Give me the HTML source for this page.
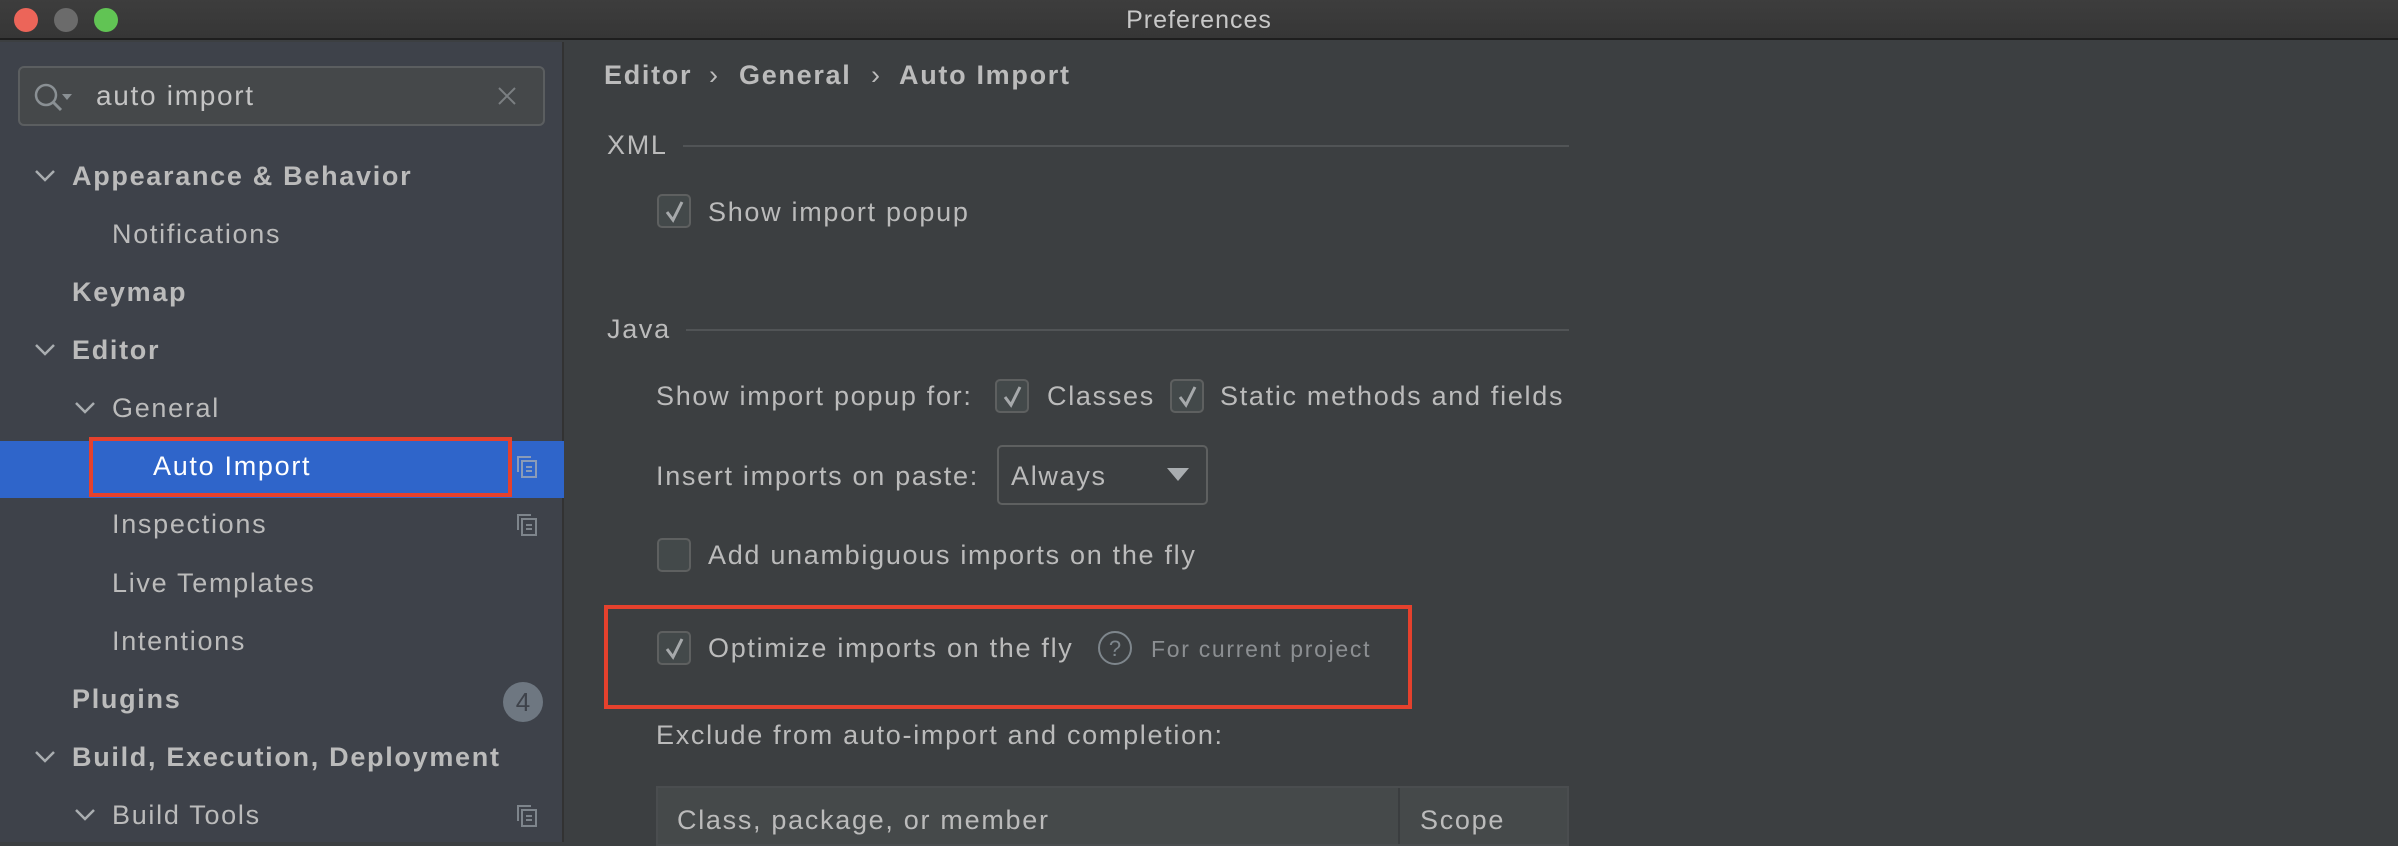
<!DOCTYPE html>
<html><head><meta charset="utf-8"><style>
*{margin:0;padding:0;box-sizing:border-box}
body{width:2398px;height:842px;overflow:hidden;background:#3c3f41;font-family:"Liberation Sans",sans-serif;color:#bbbbbb;position:relative}
.t{position:absolute;height:40px;line-height:40px;white-space:nowrap;font-size:27px;letter-spacing:1.7px}
.b{font-weight:bold}
.cb{position:absolute;width:34px;height:34px;border:2px solid #5e6060;border-radius:5px;background:#43494a}
.cb svg{position:absolute;left:4px;top:3px}
.arr{position:absolute;width:22px;height:14px}
.cp{position:absolute;width:22px;height:24px}
</style></head><body>
<div style="position:absolute;left:0;top:0;width:2398px;height:40px;background:linear-gradient(#3d3d3d,#363636);border-bottom:2px solid #1e1e1e"></div>
<div style="position:absolute;left:14px;top:8px;width:24px;height:24px;border-radius:50%;background:#ec6559"></div>
<div style="position:absolute;left:54px;top:8px;width:24px;height:24px;border-radius:50%;background:#6b6b6b"></div>
<div style="position:absolute;left:94px;top:8px;width:24px;height:24px;border-radius:50%;background:#61c454"></div>
<div class="t" style="left:0;width:2398px;text-align:center;top:0;color:#c8c8c8;font-size:25px;letter-spacing:1px">Preferences</div>
<div style="position:absolute;left:0;top:42px;width:564px;height:800px;background:#3e424a;border-right:2px solid #323232"></div>
<div style="position:absolute;left:18px;top:66px;width:527px;height:60px;border:2px solid #5b5e60;border-radius:6px;background:#45484a"></div>
<svg style="position:absolute;left:32px;top:82px" width="44" height="36"><circle cx="14" cy="13" r="10" fill="none" stroke="#8a9094" stroke-width="2.5"/><line x1="21" y1="20" x2="29" y2="28" stroke="#8a9094" stroke-width="3"/><path d="M30 12 L40 12 L35 18Z" fill="#8a9094"/></svg>
<div class="t" style="left:96px;top:76px;color:#c4c4c4;font-size:28px">auto import</div>
<svg style="position:absolute;left:497px;top:86px" width="20" height="20"><path d="M2 2L18 18M18 2L2 18" stroke="#7b7f82" stroke-width="2"/></svg>

<div style="position:absolute;left:0;top:441px;width:564px;height:57px;background:#2f65ca"></div>
<div style="position:absolute;left:89px;top:437px;width:423px;height:60px;border:4px solid #e5412d"></div>

<svg class="arr" style="left:34px;top:169px" viewBox="0 0 22 14"><path d="M2 2L11 11L20 2" fill="none" stroke="#a9adb0" stroke-width="2.5"/></svg>
<div class="t b" style="left:72px;top:156px">Appearance &amp; Behavior</div>
<div class="t" style="left:112px;top:214px">Notifications</div>
<div class="t b" style="left:72px;top:272px">Keymap</div>
<svg class="arr" style="left:34px;top:343px" viewBox="0 0 22 14"><path d="M2 2L11 11L20 2" fill="none" stroke="#a9adb0" stroke-width="2.5"/></svg>
<div class="t b" style="left:72px;top:330px">Editor</div>
<svg class="arr" style="left:74px;top:401px" viewBox="0 0 22 14"><path d="M2 2L11 11L20 2" fill="none" stroke="#a9adb0" stroke-width="2.5"/></svg>
<div class="t" style="left:112px;top:388px">General</div>
<div class="t" style="left:153px;top:446px;color:#fff">Auto Import</div>
<div class="t" style="left:112px;top:504px">Inspections</div>
<div class="t" style="left:112px;top:563px">Live Templates</div>
<div class="t" style="left:112px;top:621px">Intentions</div>
<div class="t b" style="left:72px;top:679px">Plugins</div>
<div style="position:absolute;left:503px;top:682px;width:40px;height:40px;border-radius:50%;background:#6e7781;color:#3e424a;font-size:26px;line-height:40px;text-align:center">4</div>
<svg class="arr" style="left:34px;top:750px" viewBox="0 0 22 14"><path d="M2 2L11 11L20 2" fill="none" stroke="#a9adb0" stroke-width="2.5"/></svg>
<div class="t b" style="left:72px;top:737px">Build, Execution, Deployment</div>
<svg class="arr" style="left:74px;top:808px" viewBox="0 0 22 14"><path d="M2 2L11 11L20 2" fill="none" stroke="#a9adb0" stroke-width="2.5"/></svg>
<div class="t" style="left:112px;top:795px">Build Tools</div>
<svg class="cp" style="left:516px;top:455px" viewBox="0 0 22 24"><path d="M2 17V2H15" fill="none" stroke="#8a9bb8" stroke-width="2"/><rect x="6" y="6" width="14" height="16" fill="none" stroke="#8a9bb8" stroke-width="2"/><path d="M10 12H16M10 16H16" stroke="#8a9bb8" stroke-width="2"/></svg>
<svg class="cp" style="left:516px;top:513px" viewBox="0 0 22 24"><path d="M2 17V2H15" fill="none" stroke="#7e858c" stroke-width="2"/><rect x="6" y="6" width="14" height="16" fill="none" stroke="#7e858c" stroke-width="2"/><path d="M10 12H16M10 16H16" stroke="#7e858c" stroke-width="2"/></svg>
<svg class="cp" style="left:516px;top:804px" viewBox="0 0 22 24"><path d="M2 17V2H15" fill="none" stroke="#7e858c" stroke-width="2"/><rect x="6" y="6" width="14" height="16" fill="none" stroke="#7e858c" stroke-width="2"/><path d="M10 12H16M10 16H16" stroke="#7e858c" stroke-width="2"/></svg>

<div class="t b" style="left:604px;top:55px">Editor</div>
<div class="t" style="left:709px;top:55px">›</div>
<div class="t b" style="left:739px;top:55px">General</div>
<div class="t" style="left:871px;top:55px">›</div>
<div class="t b" style="left:899px;top:55px">Auto Import</div>
<div class="t" style="left:607px;top:125px">XML</div>
<div style="position:absolute;left:683px;top:145px;width:886px;height:2px;background:#515456"></div>
<div class="cb" style="left:657px;top:194px"><svg width="24" height="26"><path d="M4 13L10 21L19 3" fill="none" stroke="#a6a9ab" stroke-width="3"/></svg></div>
<div class="t" style="left:708px;top:192px">Show import popup</div>
<div class="t" style="left:607px;top:309px">Java</div>
<div style="position:absolute;left:686px;top:329px;width:883px;height:2px;background:#515456"></div>
<div class="t" style="left:656px;top:376px">Show import popup for:</div>
<div class="cb" style="left:995px;top:379px"><svg width="24" height="26"><path d="M4 13L10 21L19 3" fill="none" stroke="#a6a9ab" stroke-width="3"/></svg></div>
<div class="t" style="left:1047px;top:376px">Classes</div>
<div class="cb" style="left:1170px;top:379px"><svg width="24" height="26"><path d="M4 13L10 21L19 3" fill="none" stroke="#a6a9ab" stroke-width="3"/></svg></div>
<div class="t" style="left:1220px;top:376px">Static methods and fields</div>
<div class="t" style="left:656px;top:456px">Insert imports on paste:</div>
<div style="position:absolute;left:997px;top:445px;width:211px;height:60px;border:2px solid #5e6060;border-radius:5px;background:#3c3f41"></div>
<div class="t" style="left:1011px;top:456px">Always</div>
<svg style="position:absolute;left:1167px;top:468px" width="22" height="14"><path d="M0 0H22L11 13Z" fill="#a9adb0"/></svg>
<div class="cb" style="left:657px;top:538px"></div>
<div class="t" style="left:708px;top:535px">Add unambiguous imports on the fly</div>
<div style="position:absolute;left:604px;top:605px;width:808px;height:104px;border:4px solid #e5412d"></div>
<div class="cb" style="left:657px;top:631px"><svg width="24" height="26"><path d="M4 13L10 21L19 3" fill="none" stroke="#a6a9ab" stroke-width="3"/></svg></div>
<div class="t" style="left:708px;top:628px">Optimize imports on the fly</div>
<svg style="position:absolute;left:1097px;top:630px" width="36" height="36"><circle cx="18" cy="18" r="16" fill="none" stroke="#7e868c" stroke-width="2"/><text x="18" y="26" text-anchor="middle" font-family="Liberation Sans" font-size="22" fill="#7e868c">?</text></svg>
<div class="t" style="left:1151px;top:629px;font-size:23px;color:#8c8f92">For current project</div>
<div class="t" style="left:656px;top:715px">Exclude from auto-import and completion:</div>
<div style="position:absolute;left:656px;top:786px;width:913px;height:60px;border:2px solid #4a4d4f;background:#45494a"></div>
<div style="position:absolute;left:1398px;top:788px;width:2px;height:56px;background:#3a3d3f"></div>
<div class="t" style="left:677px;top:800px">Class, package, or member</div>
<div class="t" style="left:1420px;top:800px">Scope</div>
</body></html>
